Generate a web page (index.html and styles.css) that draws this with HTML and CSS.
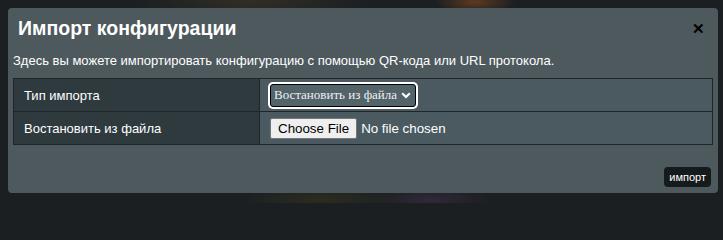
FILE: index.html
```html
<!DOCTYPE html>
<html lang="ru">
<head>
<meta charset="utf-8">
<title>Импорт конфигурации</title>
<link rel="stylesheet" href="styles.css">
</head>
<body>
<div class="backdrop">
  <div class="modal">
    <div class="header">
      <h1 class="title">Импорт конфигурации</h1>
      <span class="close">&#x2715;</span>
    </div>
    <p class="desc">Здесь вы можете импортировать конфигурацию с помощью QR-кода или URL протокола.</p>
    <table class="form">
      <tr>
        <td class="label">Тип импорта</td>
        <td class="value">
          <span class="select">Востановить из файла
            <svg class="chev" width="10" height="7" viewBox="0 0 10 7"><path d="M1.2 1.2 L5 5 L8.8 1.2" fill="none" stroke="#fff" stroke-width="2.2"/></svg>
          </span>
        </td>
      </tr>
      <tr>
        <td class="label">Востановить из файла</td>
        <td class="value"><span class="filebtn">Choose File</span><span class="nofile">No file chosen</span></td>
      </tr>
    </table>
    <div class="footer"><span class="btn">импорт</span></div>
  </div>
</div>
</body>
</html>
```
FILE: styles.css
```css
html, body {
  margin: 0;
  padding: 0;
}
body {
  width: 723px;
  height: 203px;
  overflow: hidden;
  font-family: "Liberation Sans", Arial, sans-serif;
  background: #1b1f22;
}
.backdrop {
  height: 203px;
  padding: 8px 0 0 8px;
  box-sizing: border-box;
  background:
    radial-gradient(ellipse 40px 12px at 475px 2px, rgba(150, 80, 30, 0.55), transparent),
    radial-gradient(ellipse 120px 20px at 250px 2px, rgba(70, 60, 40, 0.5), transparent),
    radial-gradient(ellipse 60px 14px at 430px 200px, rgba(70, 50, 80, 0.5), transparent),
    radial-gradient(ellipse 80px 14px at 320px 200px, rgba(60, 60, 30, 0.5), transparent),
    #1b1f22;
}
.modal {
  width: 710px;
  height: 185px;
  box-sizing: border-box;
  padding: 0 5px;
  background: #4e595e;
  border-radius: 4px;
  color: #fff;
  display: flex;
  flex-direction: column;
}
.header {
  height: 40px;
  display: flex;
  align-items: center;
  justify-content: space-between;
  padding: 0 8px 0 5px;
}
.title {
  margin: 0;
  font-size: 19.5px;
  font-weight: bold;
  line-height: 40px;
  color: #fff;
}
.close {
  font-size: 15px;
  font-weight: bold;
  color: #000;
  line-height: 1;
}
.desc {
  margin: 5px 0 0 0;
  font-size: 13px;
  line-height: 16px;
  color: #fff;
}
.form {
  margin-top: 9px;
  width: 700px;
  border-collapse: collapse;
  border: 1px solid #1f2528;
  font-size: 13px;
}
.form td {
  height: 33px;
  padding: 0;
  border: 1px solid #1f2528;
  box-sizing: border-box;
}
.label {
  width: 246px;
  background: #2f3a3f;
  color: #fff;
  padding-left: 10px !important;
}
.value {
  background: #4a5a60;
  padding-left: 9px !important;
}
.select {
  display: inline-flex;
  align-items: center;
  gap: 4px;
  height: 21px;
  padding: 0 4px 0 3px;
  border: 1px solid #000;
  border-radius: 3px;
  box-shadow: 0 0 0 2px #fff;
  background: #52636a;
  color: #f0f0f0;
  font-family: "Liberation Serif", "Times New Roman", serif;
  font-size: 13px;
  margin-left: 1px;
  vertical-align: middle;
}
.chev {
  display: block;
}
.filebtn {
  display: inline-block;
  height: 19px;
  line-height: 19px;
  padding: 0 7px;
  background: #efefef;
  border: 1px solid #767676;
  border-radius: 2px;
  color: #000;
  font-size: 13.33px;
  margin-left: 1px;
  vertical-align: middle;
}
.nofile {
  margin-left: 4px;
  color: #fff;
  font-size: 13.33px;
  vertical-align: middle;
}
.footer {
  display: flex;
  justify-content: flex-end;
  margin-top: 22px;
  padding-right: 2px;
}
.btn {
  display: inline-block;
  height: 20px;
  line-height: 20px;
  padding: 0 5px;
  background: #151a1c;
  border-radius: 4px;
  color: #fff;
  font-size: 11px;
}
```
